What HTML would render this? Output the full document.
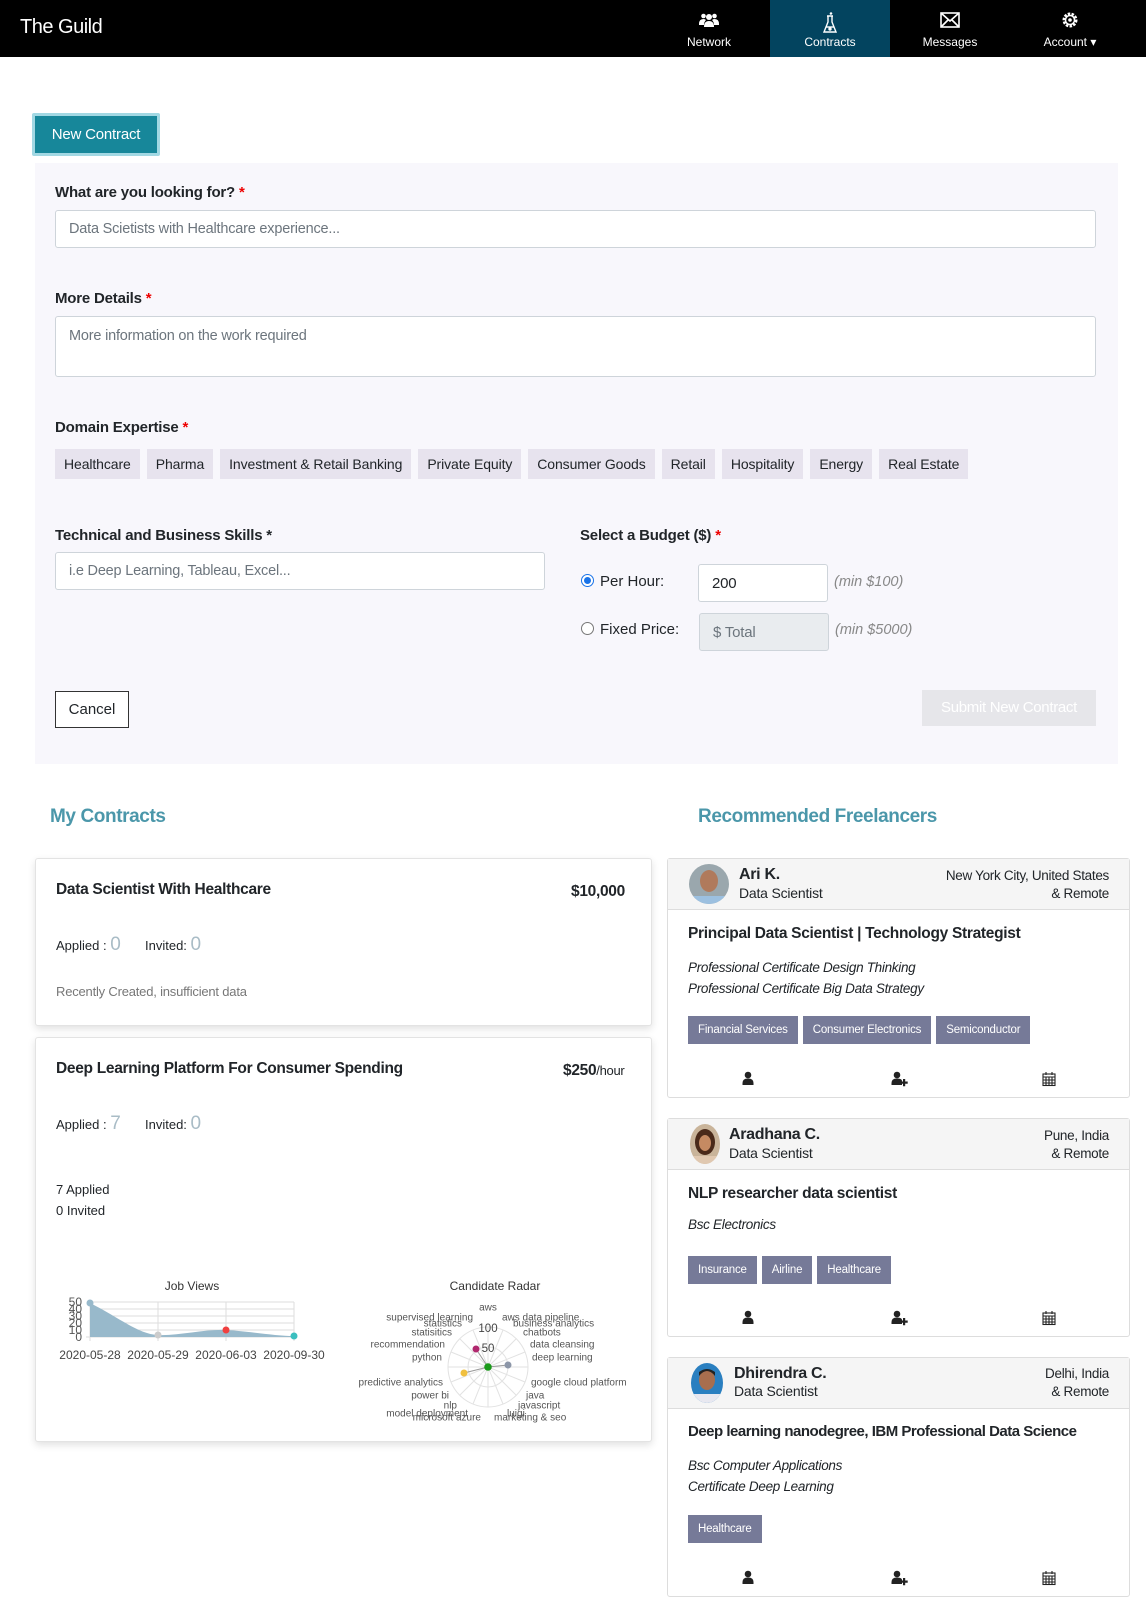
<!DOCTYPE html>
<html><head><meta charset="utf-8">
<style>
*{box-sizing:border-box;margin:0;padding:0}
body{width:1146px;height:1611px;position:relative;background:#fff;font-family:"Liberation Sans",sans-serif;color:#212529;overflow:hidden}
.a{position:absolute}
.nav{left:0;top:0;width:1146px;height:57px;background:#000}
.navi{top:0;height:57px;width:120px;color:#fff;font-size:12px;text-align:center}
.navi svg{position:absolute;left:50%;top:12px;transform:translateX(-50%)}
.navi span{position:absolute;left:0;right:0;top:35px}
.lbl{font-size:15px;font-weight:bold;color:#212529;letter-spacing:-.2px}
.req{color:#e00}
.inp{background:#fff;border:1px solid #ced4da;border-radius:3px;font-size:14.5px;color:#6c757d;padding-left:13px;display:flex;align-items:center;letter-spacing:-.2px}
.chips{left:55px;top:449px;display:flex;gap:7px}
.chip{height:30px;background:#e7e3ee;font-size:14px;line-height:30px;padding:0 9px;color:#212529;letter-spacing:-.1px}
.card{background:#fff;border:1px solid #e3e3e3;border-radius:3px;box-shadow:0 3px 8px rgba(0,0,0,.12)}
.rc{left:667px;width:463px;background:#fff;border:1px solid #ddd;border-radius:3px}
.rh{position:absolute;left:0;top:0;right:0;height:51px;background:#f5f5f5;border-bottom:1px solid #ddd}
.tags{position:absolute;left:20px;display:flex;gap:5px}
.tag{height:28px;line-height:28px;background:#767a98;color:#fff;font-size:11.5px;padding:0 10px;letter-spacing:-.2px}
.it{font-style:italic;font-size:13.5px;color:#212529;letter-spacing:-.3px}
.big{font-size:15.5px;font-weight:bold;letter-spacing:-.3px}
</style></head><body>
<div class="a nav">
 <div class="a" style="left:20px;top:16px;color:#fff;font-size:20px;letter-spacing:-.5px">The Guild</div>
 <div class="a navi" style="left:649px;width:120px"><svg width="20" height="16" viewBox="0 0 20 16" fill="#fff"><circle cx="10" cy="5" r="3"/><circle cx="4.5" cy="4" r="2.3"/><circle cx="15.5" cy="4" r="2.3"/><path d="M5 15q0-6 5-6t5 6z"/><path d="M0 12q0-5 4.5-5 1.5 0 2.5 1-2 2-2 5H0zM20 12q0-5-4.5-5-1.5 0-2.5 1 2 2 2 5H20z"/></svg><span>Network</span></div>
 <div class="a navi" style="left:770px;background:#03445f"><svg width="14" height="22" viewBox="0 0 14 22" fill="none" stroke="#fff" stroke-width="1.4"><path d="M4 4h6M5 4v6L1 20h12L9 10V4"/><path d="M3 15h8" /><circle cx="7" cy="17" r="1" fill="#fff"/><circle cx="8" cy="1.5" r=".6" fill="#fff"/></svg><span>Contracts</span></div>
 <div class="a navi" style="left:890px"><svg width="20" height="16" viewBox="0 0 20 16" fill="none" stroke="#fff" stroke-width="1.6"><rect x="1" y="1" width="18" height="14"/><path d="M1 1l9 8 9-8M1 15l7-7M19 15l-7-7"/></svg><span>Messages</span></div>
 <div class="a navi" style="left:1010px"><svg width="16" height="16" viewBox="0 0 16 16"><circle cx="8" cy="8" r="6" fill="none" stroke="#fff" stroke-width="3" stroke-dasharray="2.4 1.3"/><circle cx="8" cy="8" r="4.5" fill="none" stroke="#fff" stroke-width="1.5"/><circle cx="8" cy="8" r="1.8" fill="#fff"/></svg><span>Account &#9662;</span></div>
</div>

<div class="a" style="left:32px;top:113px;width:128px;height:43px;background:#a2d8e3;border-radius:2px"></div>
<div class="a" style="left:35px;top:116px;width:122px;height:37px;background:#17879a;color:#fff;font-size:15px;line-height:37px;text-align:center;letter-spacing:-.2px">New Contract</div>

<div class="a" style="left:35px;top:163px;width:1083px;height:601px;background:#f8f7fc"></div>
<div class="a lbl" style="left:55px;top:184px">What are you looking for? <span class="req">*</span></div>
<div class="a inp" style="left:55px;top:210px;width:1041px;height:38px">Data Scietists with Healthcare experience...</div>
<div class="a lbl" style="left:55px;top:290px">More Details <span class="req">*</span></div>
<div class="a inp" style="left:55px;top:316px;width:1041px;height:61px;align-items:flex-start;padding-top:11px">More information on the work required</div>
<div class="a lbl" style="left:55px;top:419px">Domain Expertise <span class="req">*</span></div>
<div class="a chips">
<div class="chip">Healthcare</div><div class="chip">Pharma</div><div class="chip">Investment &amp; Retail Banking</div><div class="chip">Private Equity</div><div class="chip">Consumer Goods</div><div class="chip">Retail</div><div class="chip">Hospitality</div><div class="chip">Energy</div><div class="chip">Real Estate</div>
</div>

<div class="a lbl" style="left:55px;top:527px">Technical and Business Skills *</div>
<div class="a inp" style="left:55px;top:552px;width:490px;height:38px">i.e Deep Learning, Tableau, Excel...</div>
<div class="a lbl" style="left:580px;top:527px">Select a Budget ($) <span class="req">*</span></div>
<div class="a" style="left:581px;top:574px;width:13px;height:13px;border-radius:50%;background:#fff;border:1px solid #1a73e8"><div style="margin:2px;width:7px;height:7px;border-radius:50%;background:#1a73e8"></div></div>
<div class="a" style="left:600px;top:573px;font-size:15px">Per Hour:</div>
<div class="a inp" style="left:698px;top:564px;width:130px;height:38px;color:#212529;font-size:15px">200</div>
<div class="a" style="left:834px;top:574px;font-size:14.5px;font-style:italic;color:#888">(min $100)</div>
<div class="a" style="left:581px;top:622px;width:13px;height:13px;border-radius:50%;background:#fff;border:1px solid #777"></div>
<div class="a" style="left:600px;top:621px;font-size:15px">Fixed Price:</div>
<div class="a inp" style="left:699px;top:613px;width:130px;height:38px;background:#e9ecef;font-size:15px">$ Total</div>
<div class="a" style="left:835px;top:622px;font-size:14.5px;font-style:italic;color:#888">(min $5000)</div>
<div class="a" style="left:55px;top:691px;width:74px;height:37px;border:1px solid #333;font-size:15px;line-height:35px;text-align:center;background:#fff">Cancel</div>
<div class="a" style="left:922px;top:690px;width:174px;height:36px;background:#e6e6ea;color:#fff;font-size:15px;line-height:36px;text-align:center;letter-spacing:-.3px">Submit New Contract</div>

<div class="a" style="left:50px;top:806px;font-size:19px;font-weight:bold;color:#4b97aa;letter-spacing:-.4px">My Contracts</div>
<div class="a" style="left:698px;top:806px;font-size:19px;font-weight:bold;color:#4b97aa;letter-spacing:-.4px">Recommended Freelancers</div>

<div class="a card" style="left:35px;top:858px;width:617px;height:168px"></div>
<div class="a big" style="left:56px;top:881px">Data Scientist With Healthcare</div>
<div class="a big" style="left:571px;top:883px">$10,000</div>
<div class="a" style="left:56px;top:934px;font-size:13px">Applied : <span style="font-size:19px;color:#a9bcc6">0</span></div>
<div class="a" style="left:145px;top:934px;font-size:13px">Invited: <span style="font-size:19px;color:#a9bcc6">0</span></div>
<div class="a" style="left:56px;top:984px;font-size:13px;color:#777;letter-spacing:-.2px">Recently Created, insufficient data</div>

<div class="a card" style="left:35px;top:1037px;width:617px;height:405px"></div>
<div class="a big" style="left:56px;top:1060px">Deep Learning Platform For Consumer Spending</div>
<div class="a big" style="left:563px;top:1062px">$250<span style="font-size:13px;font-weight:normal">/hour</span></div>
<div class="a" style="left:56px;top:1113px;font-size:13px">Applied : <span style="font-size:19px;color:#a9bcc6">7</span></div>
<div class="a" style="left:145px;top:1113px;font-size:13px">Invited: <span style="font-size:19px;color:#a9bcc6">0</span></div>
<div class="a" style="left:56px;top:1182px;font-size:13px">7 Applied</div>
<div class="a" style="left:56px;top:1203px;font-size:13px">0 Invited</div>

<svg class="a" style="left:0;top:0" width="1146" height="1611" font-family="Liberation Sans, sans-serif">
 <text x="192" y="1290" font-size="12" text-anchor="middle" fill="#333">Job Views</text>
 <g stroke="#ddd" stroke-width="1">
  <line x1="90" y1="1302" x2="294" y2="1302"/><line x1="90" y1="1309" x2="294" y2="1309"/><line x1="90" y1="1316" x2="294" y2="1316"/><line x1="90" y1="1323" x2="294" y2="1323"/><line x1="90" y1="1330" x2="294" y2="1330"/><line x1="86" y1="1337" x2="294" y2="1337"/>
  <line x1="90" y1="1302" x2="90" y2="1341"/><line x1="158" y1="1302" x2="158" y2="1341"/><line x1="226" y1="1302" x2="226" y2="1341"/><line x1="294" y1="1302" x2="294" y2="1341"/>
 </g>
 <path d="M90 1303C120 1318 138 1334 158 1335S205 1329 226 1330S275 1336 294 1336L294 1337L90 1337Z" fill="#98b9cb"/>
 <circle cx="90" cy="1303" r="3.5" fill="#98b9cb"/><circle cx="158" cy="1335" r="3.5" fill="#ccc"/><circle cx="226" cy="1330" r="3.5" fill="#f04040"/><circle cx="294" cy="1336" r="3.5" fill="#3bbfbf"/>
 <g font-size="12" fill="#555" text-anchor="end">
  <text x="82" y="1306">50</text><text x="82" y="1313">40</text><text x="82" y="1320">30</text><text x="82" y="1327">20</text><text x="82" y="1334">10</text><text x="82" y="1341">0</text>
 </g>
 <g font-size="12" fill="#444" text-anchor="middle">
  <text x="90" y="1359">2020-05-28</text><text x="158" y="1359">2020-05-29</text><text x="226" y="1359">2020-06-03</text><text x="294" y="1359">2020-09-30</text>
 </g>
 <text x="495" y="1290" font-size="12" text-anchor="middle" fill="#333">Candidate Radar</text>
 <g stroke="#e2e2e2" fill="none">
  <circle cx="488" cy="1367" r="40"/><circle cx="488" cy="1367" r="20"/>
  <path d="M488 1327V1407M448 1367H528M460 1339L516 1395M516 1339L460 1395M473 1330L503 1404M503 1330L473 1404M451 1352L525 1382M525 1352L451 1382"/>
 </g>
 <path d="M476 1349L488 1367L508 1365M464 1373L488 1367" stroke="#999" fill="none"/>
 <circle cx="476" cy="1349" r="3.5" fill="#b0286e"/><circle cx="508" cy="1365" r="3.5" fill="#8c96a8"/><circle cx="464" cy="1373" r="3.5" fill="#f0c040"/><circle cx="488" cy="1367" r="3.8" fill="#1a9a1a"/>
 <text x="488" y="1332" font-size="11.5" text-anchor="middle" fill="#444">100</text>
 <text x="488" y="1352" font-size="11.5" text-anchor="middle" fill="#444">50</text>
 <g font-size="10" fill="#555" dominant-baseline="middle">
  <text x="488" y="1308" text-anchor="middle">aws</text>
  <g text-anchor="end">
   <text x="473" y="1318">supervised learning</text><text x="462" y="1324">statistics</text><text x="452" y="1333">statisitics</text><text x="445" y="1345">recommendation</text><text x="442" y="1358">python</text><text x="443" y="1383">predictive analytics</text><text x="449" y="1396">power bi</text><text x="457" y="1406">nlp</text><text x="468" y="1414">model deployment</text><text x="481" y="1418">microsoft azure</text>
  </g>
  <text x="502" y="1318">aws data pipeline</text><text x="513" y="1324">business analytics</text><text x="523" y="1333">chatbots</text><text x="530" y="1345">data cleansing</text><text x="532" y="1358">deep learning</text><text x="531" y="1383">google cloud platform</text><text x="526" y="1396">java</text><text x="518" y="1406">javascript</text><text x="507" y="1414">luigi</text><text x="494" y="1418">marketing &amp; seo</text>
 </g>
</svg>

<div class="a rc" style="top:858px;height:240px">
 <div class="rh"></div>
 <svg class="a" style="left:21px;top:5px" width="40" height="40" viewBox="0 0 40 40"><clipPath id="c1"><circle cx="20" cy="20" r="20"/></clipPath><g clip-path="url(#c1)"><rect width="40" height="40" fill="#9aa7ad"/><ellipse cx="20" cy="17" rx="9" ry="11" fill="#b07a5c"/><rect x="4" y="32" width="32" height="10" fill="#9cc0e0"/></g></svg>
 <div class="a" style="left:71px;top:7px;font-size:16px;font-weight:bold;letter-spacing:-.3px">Ari K.</div>
 <div class="a" style="left:71px;top:26px;font-size:14px;letter-spacing:-.2px">Data Scientist</div>
 <div class="a" style="right:20px;top:8px;font-size:13.5px;text-align:right;line-height:18px;letter-spacing:-.3px">New York City, United States<br>&amp; Remote</div>
 <div class="a big" style="left:20px;top:66px">Principal Data Scientist | Technology Strategist</div>
 <div class="a it" style="left:20px;top:98px;line-height:21px">Professional Certificate Design Thinking<br>Professional Certificate Big Data Strategy</div>
 <div class="tags" style="top:157px"><div class="tag">Financial Services</div><div class="tag">Consumer Electronics</div><div class="tag">Semiconductor</div></div>
</div>
<div class="a rc" style="top:1118px;height:219px">
 <div class="rh"></div>
 <svg class="a" style="left:21px;top:5px" width="32" height="40" viewBox="0 0 32 40"><clipPath id="c2"><ellipse cx="16" cy="20" rx="15" ry="20"/></clipPath><g clip-path="url(#c2)"><rect width="32" height="40" fill="#c9b49a"/><ellipse cx="16" cy="18" rx="10" ry="13" fill="#4a2a1a"/><ellipse cx="16" cy="19" rx="6" ry="8" fill="#c58a62"/><rect x="2" y="32" width="28" height="10" fill="#e0c8b0"/></g></svg>
 <div class="a" style="left:61px;top:7px;font-size:16px;font-weight:bold;letter-spacing:-.3px">Aradhana C.</div>
 <div class="a" style="left:61px;top:26px;font-size:14px;letter-spacing:-.2px">Data Scientist</div>
 <div class="a" style="right:20px;top:8px;font-size:13.5px;text-align:right;line-height:18px;letter-spacing:-.3px">Pune, India<br>&amp; Remote</div>
 <div class="a big" style="left:20px;top:66px">NLP researcher data scientist</div>
 <div class="a it" style="left:20px;top:98px">Bsc Electronics</div>
 <div class="tags" style="top:137px"><div class="tag">Insurance</div><div class="tag">Airline</div><div class="tag">Healthcare</div></div>
</div>
<div class="a rc" style="top:1357px;height:240px">
 <div class="rh"></div>
 <svg class="a" style="left:23px;top:5px" width="32" height="40" viewBox="0 0 32 40"><clipPath id="c3"><ellipse cx="16" cy="20" rx="16" ry="20"/></clipPath><g clip-path="url(#c3)"><rect width="32" height="40" fill="#2a7fc0"/><ellipse cx="16" cy="17" rx="8" ry="10" fill="#a86e4e"/><path d="M8 13q8-10 16 0v-4q-8-6-16 0z" fill="#222"/><rect x="2" y="31" width="28" height="10" fill="#e8e8f0"/></g></svg>
 <div class="a" style="left:66px;top:7px;font-size:16px;font-weight:bold;letter-spacing:-.3px">Dhirendra C.</div>
 <div class="a" style="left:66px;top:25px;font-size:14px;letter-spacing:-.2px">Data Scientist</div>
 <div class="a" style="right:20px;top:7px;font-size:13.5px;text-align:right;line-height:18px;letter-spacing:-.3px">Delhi, India<br>&amp; Remote</div>
 <div class="a big" style="left:20px;top:65px;white-space:nowrap;font-size:15px;letter-spacing:-.5px">Deep learning nanodegree, IBM Professional Data Science</div>
 <div class="a it" style="left:20px;top:97px;line-height:21px">Bsc Computer Applications<br>Certificate Deep Learning</div>
 <div class="tags" style="top:157px"><div class="tag">Healthcare</div></div>
</div>

<svg class="a" style="left:0;top:0;pointer-events:none" width="1146" height="1611">
 <defs>
  <g id="u"><circle cx="0" cy="-4" r="3.3"/><path d="M-5.5 6v-2q0-4.5 5.5-4.5t5.5 4.5v2z"/></g>
  <g id="ua"><circle cx="-2" cy="-4" r="3.3"/><path d="M-7.5 6v-2q0-4.5 5.5-4.5t5 3v3.5z"/><path d="M4 0h2.2v2.5h2.5v2.2h-2.5v2.5h-2.2v-2.5h-2.5v-2.2h2.5z"/></g>
  <g id="cal" fill="none" stroke="#222" stroke-width="1.1"><rect x="-6" y="-5" width="12" height="11.5"/><path d="M-6 -2h12M-6 1h12M-6 4h12M-3 -2v8.5M0 -2v8.5M3 -2v8.5M-3 -7v3M3 -7v3"/></g>
 </defs>
 <g fill="#222">
  <use href="#u" x="748" y="1079"/><use href="#ua" x="899" y="1079"/><use href="#cal" x="1049" y="1079"/>
  <use href="#u" x="748" y="1318"/><use href="#ua" x="899" y="1318"/><use href="#cal" x="1049" y="1318"/>
  <use href="#u" x="748" y="1578"/><use href="#ua" x="899" y="1578"/><use href="#cal" x="1049" y="1578"/>
 </g>
</svg>
</body></html>
